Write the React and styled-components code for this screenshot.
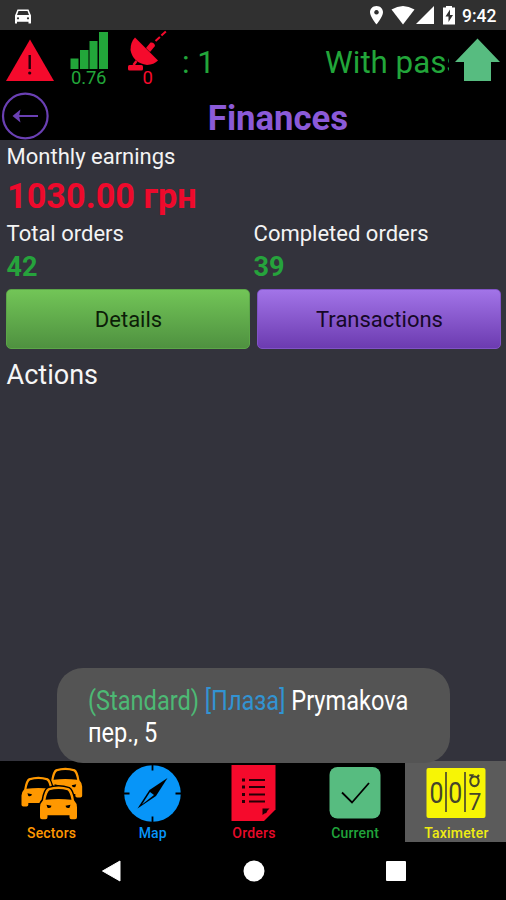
import React from "react";
import styled, { createGlobalStyle } from "styled-components";

const GlobalStyle = createGlobalStyle`
  body {
    margin: 0;
    background: #000;
    font-family: Roboto, "Liberation Sans", sans-serif;
  }
  svg {
    display: block;
    overflow: visible;
  }
`;

const Screen = styled.div`
  position: relative;
  width: 506px;
  height: 900px;
  display: flex;
  flex-direction: column;
  background: #000;
  overflow: hidden;
`;

const StatusBar = styled.div`
  height: 30px;
  display: flex;
  align-items: center;
  justify-content: space-between;
  padding: 0 8px 0 13px;
  box-sizing: border-box;
  background: #303030;
  color: #fff;
`;

const StatusIcons = styled.div`
  display: flex;
  align-items: center;
`;

const Clock = styled.span`
  width: 36px;
  margin-left: 7px;
  padding-top: 1px;
  font-size: 17.5px;
  font-weight: 500;
  line-height: 30px;
  white-space: nowrap;
`;

const InfoBar = styled.div`
  height: 60px;
  display: flex;
  align-items: flex-start;
  background: #000;
`;

const Gauge = styled.div`
  width: ${props => props.$width}px;
  margin-left: ${props => props.$gap}px;
`;

const GaugeValue = styled.div`
  padding-left: ${props => props.$indent || 0}px;
  color: ${props => props.$color};
  font-size: 18.5px;
  line-height: 19px;
  letter-spacing: -0.2px;
  white-space: nowrap;
`;

const Ticker = styled.div`
  display: flex;
  flex: 1;
  height: 60px;
  margin-left: 13px;
  overflow: hidden;
  color: #22a63a;
  font-size: 31.3px;
  line-height: 65px;
  white-space: pre;
`;

const TickerText = styled.span`
  width: ${props => props.$width}px;
  flex: none;
  overflow: hidden;
`;

const TitleBar = styled.div`
  height: 50px;
  display: grid;
  grid-template-columns: 50px 1fr;
  background: #000;
`;

const Title = styled.h1`
  margin: 0;
  padding: 3px 0 0 0;
  text-align: center;
  color: #8b5ad8;
  font-size: 34.7px;
  font-weight: 700;
  line-height: 51px;
`;

const Content = styled.div`
  height: 621px;
  padding: 1px 5px 0 6px;
  box-sizing: border-box;
  background: #33333c;
`;

const Label = styled.div`
  padding-left: 0.6px;
  color: #f4f4f4;
  font-size: 22px;
  line-height: ${props => props.$height}px;
`;

const Amount = styled.div`
  padding-left: 1px;
  color: #ee0a2c;
  font-size: 34.3px;
  font-weight: 700;
  line-height: 46px;
`;

const Columns = styled.div`
  display: grid;
  grid-template-columns: 247px 1fr;
`;

const Count = styled.div`
  padding-left: 0.6px;
  color: #26a33c;
  font-size: 27px;
  font-weight: 700;
  line-height: 36px;
`;

const Buttons = styled.div`
  display: grid;
  grid-template-columns: 1fr 1fr;
  gap: 7px;
  margin-top: 4px;
`;

const Button = styled.button`
  height: 60px;
  padding: 0 0 0 1px;
  border: 1px solid ${props => props.$edge};
  border-radius: 5px;
  background: linear-gradient(${props => props.$from}, ${props => props.$to});
  color: ${props => props.$ink};
  font-family: inherit;
  font-size: 22px;
`;

const Heading = styled.div`
  padding: 6px 0 0 0.6px;
  color: #f6f6f6;
  font-size: 27px;
  line-height: 41px;
`;

const Tabs = styled.div`
  height: 81px;
  display: grid;
  grid-template-columns: repeat(4, 101.2px) 1fr;
  background: #000;
`;

const Tab = styled.div`
  display: flex;
  flex-direction: column;
  align-items: center;
  padding-left: 2px;
  background: ${props => (props.$active ? "#5b5b5b" : "#000")};
  color: ${props => props.$color};
  font-size: 14px;
  font-weight: 500;
  line-height: 19px;
  letter-spacing: 0.2px;
`;

const SystemNav = styled.div`
  height: 58px;
  display: flex;
  align-items: center;
  justify-content: space-between;
  padding: 0 100px 0 101px;
  background: #000;
`;

const Toast = styled.div`
  position: absolute;
  left: 57px;
  top: 668px;
  width: 393px;
  height: 95px;
  padding: 17px 0 0 31px;
  box-sizing: border-box;
  border-radius: 26px;
  background: #545454;
  color: #fff;
`;

const ToastLine = styled.div`
  width: max-content;
  font-size: 27px;
  line-height: 32px;
  white-space: nowrap;
  transform: scaleX(0.873);
  transform-origin: left center;
`;

const Tint = styled.span`
  color: ${props => props.$color};
`;

const CarShape = ({ x, y, scale = 1 }) => (
  <g transform={`translate(${x} ${y}) scale(${scale})`}>
    <path
      d="M3 14 Q4.500 4 8 2 Q18.500 -1.500 29 2 Q32.500 4 34 14 Q37 17 37 21 V31 Q37 33 35 33 H31.500 Q29.500 33 29.500 31 V29 H7.500 V31 Q7.500 33 5.500 33 H2 Q0 33 0 31 V21 Q0 17 3 14Z"
      fill="#ff9800"
      stroke="#000"
      strokeWidth="3"
      paintOrder="stroke"
    />
    <path d="M5.500 13.500 Q7 5.500 9.500 4 Q18.500 1.500 27.500 4 Q30 5.500 31.500 13.500 Q18.500 12 5.500 13.500Z" fill="#000" />
    <path d="M6.500 18.500 L11.500 19.500 Q11 22.500 7.500 21.500Z M30.500 18.500 L25.500 19.500 Q26 22.500 29.500 21.500Z" fill="#000" />
  </g>
);

const SectorsIcon = () => (
  <svg width="62" height="63" viewBox="0 0 62 63">
    <CarShape x={27.5} y={6.5} scale={0.91} />
    <CarShape x={0.5} y={15.5} scale={0.91} />
    <CarShape x={19} y={25.3} />
  </svg>
);

const MapIcon = () => (
  <svg width="58" height="63" viewBox="0.5 0 58 63">
    <circle cx="29" cy="32.500" r="28.300" fill="#0795f8" />
    <path d="M29 3 V9.500 M29 55.500 V62 M0 32.500 H6 M52 32.500 H58" stroke="#000" strokeWidth="1.800" />
    <path d="M44 17 L32.500 35 L14 47.500 L26 29Z" fill="#000" />
    <path d="M26.500 31 L30.500 34 L18.500 43.500Z" fill="#0795f8" />
  </svg>
);

const OrdersIcon = () => (
  <svg width="45" height="63" viewBox="0 0 45 63">
    <path d="M0.500 4 H44.500 V48.500 L33 60 H0.500Z" fill="#f50a2c" />
    <path d="M31.500 54 V47.500 H38.500 L36.500 49.500 Q36 52 33.500 52.500Z" fill="#1c0005" />
    <path d="M18 19 H34 M18 26 H34 M18 33.500 H34 M18 40.500 H34" stroke="#250006" strokeWidth="2.200" />
    <path d="M11 19 H14 M11 26 H14 M11 33.500 H14 M11 40.500 H14" stroke="#250006" strokeWidth="2.800" />
  </svg>
);

const CurrentIcon = () => (
  <svg width="52" height="63" viewBox="0 0 52 63">
    <rect x="0.500" y="6" width="51" height="51.500" rx="8" fill="#57bc80" />
    <path d="M13 31.500 L23 41.500 L40 22" fill="none" stroke="#000" strokeWidth="1.800" />
  </svg>
);

const TaximeterIcon = () => (
  <svg width="60" height="63" viewBox="0 0 60 63">
    <rect x="0.500" y="7" width="59" height="50" rx="2" fill="#f7f505" />
    <path d="M20 11 V51 M39 11 V51" stroke="#55552a" strokeWidth="1.800" />
    <g fill="#45452a" fontSize="29" fontWeight="400" letterSpacing="0">
      <text x="3.500" y="41.500" textLength="14" lengthAdjust="spacingAndGlyphs">0</text>
      <text x="22.200" y="41.500" textLength="14" lengthAdjust="spacingAndGlyphs">0</text>
      <text x="42.500" y="49" fontSize="23">7</text>
    </g>
    {/* digit rolling out of the window */}
    <g fill="none" stroke="#45452a" strokeWidth="2.100">
      <ellipse cx="48.500" cy="20.300" rx="4.200" ry="4.800" />
      <path d="M43.300 14.300 H46.500 L45.500 17 M51 16.500 L53 14" />
    </g>
  </svg>
);

const tabs = [
  { name: "Sectors", color: "#ff9800", Icon: SectorsIcon },
  { name: "Map", color: "#0795f8", Icon: MapIcon },
  { name: "Orders", color: "#e80a2a", Icon: OrdersIcon },
  { name: "Current", color: "#20a33b", Icon: CurrentIcon },
  { name: "Taximeter", color: "#efed12", Icon: TaximeterIcon, active: true },
];

const App = () => {
  return (
    <Screen>
      <GlobalStyle />
      <StatusBar>
        <svg width="20" height="20" viewBox="0 0 20 20">
          <path
            d="M4.500 4.500 H15.500 L18 10.500 V18 Q18 18.500 17 18.500 H15.500 V16.800 H4 V18.500 H2 V10.500Z"
            fill="#fff"
          />
          <path d="M5.500 6 H14.500 L16 10 H4Z" fill="#303030" />
          <circle cx="5" cy="13.300" r="1.100" fill="#303030" />
          <circle cx="15" cy="13.300" r="1.100" fill="#303030" />
        </svg>
        <StatusIcons>
          <svg width="86" height="30" viewBox="0 0 86 30" fill="#fff">
            <path
              d="M7.500 6 C3.500 6 1 9 1 12.300 C1 16.500 7.500 24.500 7.500 24.500 S14 16.500 14 12.300 C14 9 11.500 6 7.500 6Z M7.500 10 A2.300 2.300 0 1 1 7.490 10Z"
              fillRule="evenodd"
            />
            <path d="M22.500 9.500 Q34 2.500 45.500 9.500 L34 24.500Z" />
            <path d="M65 6 V24 H47Z" />
            <path d="M77 6 H83 V7.500 H86 V24.500 H74 V7.500 H77Z" />
            <path d="M81 9.500 L76.500 16.500 H79.500 V22 L84 15 H81Z" fill="#303030" />
          </svg>
          <Clock>9:42</Clock>
        </StatusIcons>
      </StatusBar>

      <InfoBar>
        <Gauge $width={48} $gap={6}>
          <svg width="48" height="54" viewBox="0 0 48 54">
            <path d="M24 9.500 L48 51 H0Z" fill="#f50a2c" />
            <path d="M23.700 25 V39" stroke="#22000a" strokeWidth="2.400" />
            <circle cx="23.700" cy="43" r="1.600" fill="#22000a" />
          </svg>
        </Gauge>
        <Gauge $width={38} $gap={16}>
          <svg width="38" height="39" viewBox="0 0 38 39" fill="#22a63a">
            <path d="M0.500 28.500 H8.500 V39 H0.500Z M10 20 H18.500 V39 H10Z M19.500 11 H27.500 V39 H19.500Z M29 2 H38 V39 H29Z" />
          </svg>
          <GaugeValue $color="#22a63a" $indent={1}>0.76</GaugeValue>
        </Gauge>
        <Gauge $width={42} $gap={19}>
          <svg width="42" height="39" viewBox="0 0 42 39" fill="#f50a2c">
            <path d="M8 7.500 L31 30.500 Q27 34.500 20 35 Q6 33 3.500 20 Q3.500 12 8 7.500Z" />
            <path d="M19 18 L23.500 12.500 Q27.500 12 28 16 L23 22Z" />
            <path d="M28.500 11 L40 0.500" stroke="#f50a2c" strokeWidth="2" strokeDasharray="6 2" />
            <path d="M9.500 31 L6.500 35" stroke="#f50a2c" strokeWidth="2.500" />
            <rect x="1" y="35" width="15" height="5.500" rx="1.500" />
          </svg>
          <GaugeValue $color="#f50a2c" $indent={15.5}>0</GaugeValue>
        </Gauge>
        <Ticker>
          <TickerText $width={143}>: 1</TickerText>
          <TickerText $width={124}>With passenger</TickerText>
        </Ticker>
        <Gauge $width={45} $gap={6}>
          <svg width="45" height="54" viewBox="0 0 45 54">
            <path d="M22.500 8.500 L45 32 H36 V51 H9 V32 H0Z" fill="#57bc80" />
          </svg>
        </Gauge>
        <Gauge $width={6} $gap={0} />
      </InfoBar>

      <TitleBar>
        <svg width="50" height="50" viewBox="0 0 50 50">
          <circle cx="25.300" cy="26" r="22.300" fill="none" stroke="#6a40b4" strokeWidth="2.200" />
          <path d="M38 26 H18" stroke="#6a40b4" strokeWidth="2" />
          <path d="M12.500 26 L20.500 19.500 L19 26 L20.500 32.500Z" fill="#6a40b4" />
        </svg>
        <Title>Finances</Title>
      </TitleBar>

      <Content>
        <Label $height={32}>Monthly earnings</Label>
        <Amount>1030.00 грн</Amount>
        <Columns>
          <Label $height={30}>Total orders</Label>
          <Label $height={30}>Completed orders</Label>
          <Count>42</Count>
          <Count>39</Count>
        </Columns>
        <Buttons>
          <Button $from="#72c557" $to="#4f9140" $edge="#5ba648" $ink="#0c1d08">Details</Button>
          <Button $from="#a274e8" $to="#6c3bb0" $edge="#8153c6" $ink="#160827">Transactions</Button>
        </Buttons>
        <Heading>Actions</Heading>
      </Content>

      <Tabs>
        {tabs.map(({ name, color, Icon, active }) => (
          <Tab key={name} $color={color} $active={active}>
            <Icon />
            {name}
          </Tab>
        ))}
      </Tabs>

      <SystemNav>
        <svg width="20" height="22" viewBox="0 0 20 22">
          <path d="M19 1 V21 L1.500 11Z" fill="#fff" stroke="#fff" strokeLinejoin="round" />
        </svg>
        <svg width="22" height="22" viewBox="0 0 22 22">
          <circle cx="11" cy="11" r="10.500" fill="#fff" />
        </svg>
        <svg width="20" height="20" viewBox="0 0 20 20">
          <rect width="20" height="20" rx="1" fill="#fff" />
        </svg>
      </SystemNav>

      <Toast>
        <ToastLine>
          <Tint $color="#4db974">(Standard)</Tint> <Tint $color="#3293d2">[Плаза]</Tint> Prymakova
        </ToastLine>
        <ToastLine>пер., 5</ToastLine>
      </Toast>
    </Screen>
  );
};

export default App;
